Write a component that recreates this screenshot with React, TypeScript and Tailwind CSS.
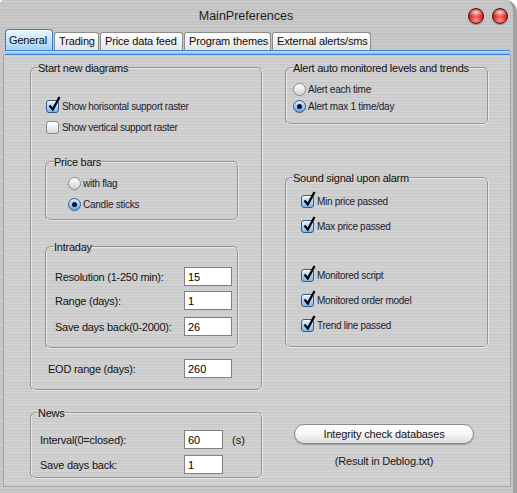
import React from "react";

function CheckBox({ checked }: { checked: boolean }) {
  if (checked) {
    return (
      <span className="relative inline-block w-[13px] h-[13px] shrink-0 rounded-[3px] border border-[#34598a] bg-linear-to-b from-[#e4f2fd] to-[#7fbaec] shadow-[inset_0_1px_0_rgba(255,255,255,0.8)]">
        <svg
          className="absolute left-[1px] top-[-5px] overflow-visible"
          width="13"
          height="16"
          viewBox="0 0 13 16"
        >
          <path d="M1.5 9.5 L4.8 13.5 L11.5 1" fill="none" stroke="#000" strokeWidth="2.3" strokeLinejoin="miter" />
        </svg>
      </span>
    );
  }
  return (
    <span className="inline-block w-[13px] h-[13px] shrink-0 rounded-[3px] border border-[#8a8a8a] bg-linear-to-b from-white to-[#d9d9d9]" />
  );
}

function Radio({ checked }: { checked: boolean }) {
  if (checked) {
    return (
      <span className="inline-flex w-[13px] h-[13px] shrink-0 items-center justify-center rounded-full border border-[#34598a] bg-linear-to-b from-[#dcefff] to-[#5ea4e6]">
        <span className="w-[5px] h-[5px] rounded-full bg-[#0b1426]" />
      </span>
    );
  }
  return (
    <span className="inline-block w-[13px] h-[13px] shrink-0 rounded-full border border-[#8a8a8a] bg-linear-to-b from-white to-[#d3d3d3]" />
  );
}

function CheckRow({ label, checked, className }: { label: string; checked: boolean; className: string }) {
  return (
    <div className={"flex items-center h-[13px] " + className}>
      <CheckBox checked={checked} />
      <span className="ml-[3px] text-[10px] leading-[13px] tracking-[-0.3px] text-[#1c2030] whitespace-nowrap">{label}</span>
    </div>
  );
}

function RadioRow({ label, checked, className }: { label: string; checked: boolean; className: string }) {
  return (
    <div className={"flex items-center h-[13px] " + className}>
      <Radio checked={checked} />
      <span className="ml-[2px] text-[10px] leading-[13px] tracking-[-0.25px] text-[#1c2030] whitespace-nowrap">{label}</span>
    </div>
  );
}

function FieldRow({
  label,
  value,
  labelW,
  inputW,
  className,
  children,
}: {
  label: string;
  value: string;
  labelW: string;
  inputW: string;
  className: string;
  children?: React.ReactNode;
}) {
  return (
    <div className={"flex items-center " + className}>
      <span className={labelW + " shrink-0 text-[11px] leading-[14px] tracking-[-0.25px] text-[#151515] whitespace-nowrap"}>{label}</span>
      <input
        readOnly
        value={value}
        className={inputW + " h-[19px] shrink-0 border border-[#808080] bg-white pl-[3px] text-[11px] tracking-normal text-black outline-none"}
      />
      {children}
    </div>
  );
}

function Group({ title, className, children }: { title: string; className: string; children?: React.ReactNode }) {
  return (
    <fieldset
      className={
        "m-0 p-0 min-w-0 border-2 [--tw-border-style:groove] [border-style:groove] border-[#e8e8e8] rounded-[6px] " + className
      }
    >
      <legend className="px-0 text-[11px] leading-[14px] tracking-[-0.25px] text-[#111] whitespace-nowrap">{title}</legend>
      {children}
    </fieldset>
  );
}

const tabs = [
  { label: "General", w: "w-[48px]", active: true },
  { label: "Trading", w: "w-[45px]", active: false },
  { label: "Price data feed", w: "w-[83px]", active: false },
  { label: "Program themes", w: "w-[87px]", active: false },
  { label: "External alerts/sms", w: "w-[99px]", active: false },
];

export default function App() {
  return (
    <div className="w-[517px] h-[493px] bg-white [font-family:'Liberation_Sans',Arial,sans-serif]">
      <div className="w-[517px] h-[493px] flex flex-col overflow-hidden rounded-tr-[12px] rounded-tl-[4px] border-r-[4px] border-[#a2a2a2] [background:repeating-linear-gradient(180deg,#c3c3c3_0px,#c3c3c3_1px,#cacaca_1px,#cacaca_3px,#bfbfbf_3px,#bfbfbf_4px,#c7c7c7_4px,#c7c7c7_6px)]">
        {/* Title bar */}
        <div className="h-[29px] shrink-0 flex items-center pt-[3px] pl-[24px] pr-[5px]">
          <div className="flex-1 text-center text-[12.5px] leading-[16px] text-[#1e1e1e]">MainPreferences</div>
          <div className="flex gap-[8px]">
            <span className="block w-[16px] h-[16px] rounded-full border border-[#5a1010] shadow-[0_1px_1px_rgba(0,0,0,0.3)] [background:radial-gradient(ellipse_55%_32%_at_50%_24%,rgba(255,255,255,0.85),rgba(255,255,255,0)),radial-gradient(circle_at_50%_80%,#ff9090_0%,#de2a2a_50%,#9c0c0c_100%)]" />
            <span className="block w-[16px] h-[16px] rounded-full border border-[#5a1010] shadow-[0_1px_1px_rgba(0,0,0,0.3)] [background:radial-gradient(ellipse_55%_32%_at_50%_24%,rgba(255,255,255,0.85),rgba(255,255,255,0)),radial-gradient(circle_at_50%_80%,#ff9090_0%,#de2a2a_50%,#9c0c0c_100%)]" />
          </div>
        </div>

        {/* Tabs */}
        <div className="h-[21px] shrink-0 flex items-end gap-[1px] pl-[5px]">
          {tabs.map((t) =>
            t.active ? (
              <div
                key={t.label}
                className={t.w + " h-[21px] flex items-center pl-[3px] pt-[1px] rounded-t-[4px] border border-b-0 border-[#3a7bc8] bg-linear-to-b from-[#eaf7ff] to-[#a2d3f6] text-[11px] tracking-[-0.15px] text-[#0c0c0c] whitespace-nowrap"}
              >
                {t.label}
              </div>
            ) : (
              <div
                key={t.label}
                className={t.w + " h-[18px] flex items-center pl-[4px] pb-[1px] rounded-t-[3px] border border-b-0 border-[#8c8c8c] bg-linear-to-b from-white to-[#e4e4e4] text-[11px] tracking-[-0.15px] text-[#0c0c0c] whitespace-nowrap"}
              >
                {t.label}
              </div>
            )
          )}
        </div>

        {/* Blue bar */}
        <div className="ml-[5px] w-[505px] h-[5px] shrink-0 border-y border-[#3f80cf] bg-linear-to-b from-[#c4e4fc] to-[#7cb9ef]" />

        {/* Page */}
        <div className="ml-[3px] w-[508px] h-[432px] shrink-0 flex pl-[26px] pt-[6px] border-x border-b border-[#a4a4a4] [background:repeating-linear-gradient(180deg,#cbcbcb_0px,#cbcbcb_1px,#d2d2d2_1px,#d2d2d2_3px,#c8c8c8_3px,#c8c8c8_4px,#cfcfcf_4px,#cfcfcf_6px)]">
          {/* Left column */}
          <div className="w-[233px] shrink-0">
            <Group title="Start new diagrams" className="h-[330px] [&>legend]:ml-[6px]">
              <CheckRow className="mt-[25px] ml-[14px]" checked label="Show horisontal support raster" />
              <CheckRow className="mt-[8px] ml-[14px]" checked={false} label="Show vertical support raster" />

              <Group title="Price bars" className="mt-[21px] ml-[13px] w-[194px] h-[66px] [&>legend]:ml-[7px]">
                <RadioRow className="mt-[8px] ml-[21px]" checked={false} label="with flag" />
                <RadioRow className="mt-[8px] ml-[21px]" checked label="Candle sticks" />
              </Group>

              <Group title="Intraday" className="mt-[19px] ml-[13px] w-[194px] h-[109px] [&>legend]:ml-[7px]">
                <FieldRow className="mt-[13px] ml-[8px]" labelW="w-[129px]" inputW="w-[48px]" label="Resolution (1-250 min):" value="15" />
                <FieldRow className="mt-[5px] ml-[8px]" labelW="w-[129px]" inputW="w-[48px]" label="Range (days):" value="1" />
                <FieldRow className="mt-[7px] ml-[8px]" labelW="w-[129px]" inputW="w-[48px]" label="Save days back(0-2000):" value="26" />
              </Group>

              <FieldRow className="mt-[10px] ml-[16px]" labelW="w-[136px]" inputW="w-[48px]" label="EOD range (days):" value="260" />
            </Group>

            <Group title="News" className="mt-[15px] h-[73px] [&>legend]:ml-[6px]">
              <FieldRow className="mt-[10px] ml-[8px]" labelW="w-[144px]" inputW="w-[39px]" label="Interval(0=closed):" value="60">
                <span className="ml-[9px] text-[11px] leading-[14px] text-[#151515]">(s)</span>
              </FieldRow>
              <FieldRow className="mt-[6px] ml-[8px]" labelW="w-[144px]" inputW="w-[39px]" label="Save days back:" value="1" />
            </Group>
          </div>

          {/* Right column */}
          <div className="ml-[22px] w-[204px] shrink-0">
            <Group title="Alert auto monitored levels and trends" className="h-[64px] [&>legend]:ml-[6px]">
              <RadioRow className="mt-[8px] ml-[6px]" checked={false} label="Alert each time" />
              <RadioRow className="mt-[4px] ml-[6px]" checked label="Alert max 1 time/day" />
            </Group>

            <Group title="Sound signal upon alarm" className="mt-[46px] h-[177px] [&>legend]:ml-[6px]">
              <CheckRow className="mt-[10px] ml-[14px]" checked label="Min price passed" />
              <CheckRow className="mt-[12px] ml-[14px]" checked label="Max price passed" />
              <CheckRow className="mt-[36px] ml-[14px]" checked label="Monitored script" />
              <CheckRow className="mt-[12px] ml-[14px]" checked label="Monitored order model" />
              <CheckRow className="mt-[12px] ml-[14px]" checked label="Trend line passed" />
            </Group>

            <button
              type="button"
              className="block mt-[76px] ml-[9px] w-[180px] h-[20px] rounded-full border border-[#8a8a8a] bg-linear-to-b from-white via-[#f7f7f7] to-[#dcdcdc] shadow-[0_1px_1px_rgba(0,0,0,0.25)] text-[11px] leading-[18px] tracking-[-0.15px] text-[#111]"
            >
              Integrity check databases
            </button>
            <div className="mt-[10px] ml-[9px] w-[180px] text-center text-[11px] leading-[14px] tracking-[-0.2px] text-[#151a2a]">
              (Result in Deblog.txt)
            </div>
          </div>
        </div>
      </div>
    </div>
  );
}
